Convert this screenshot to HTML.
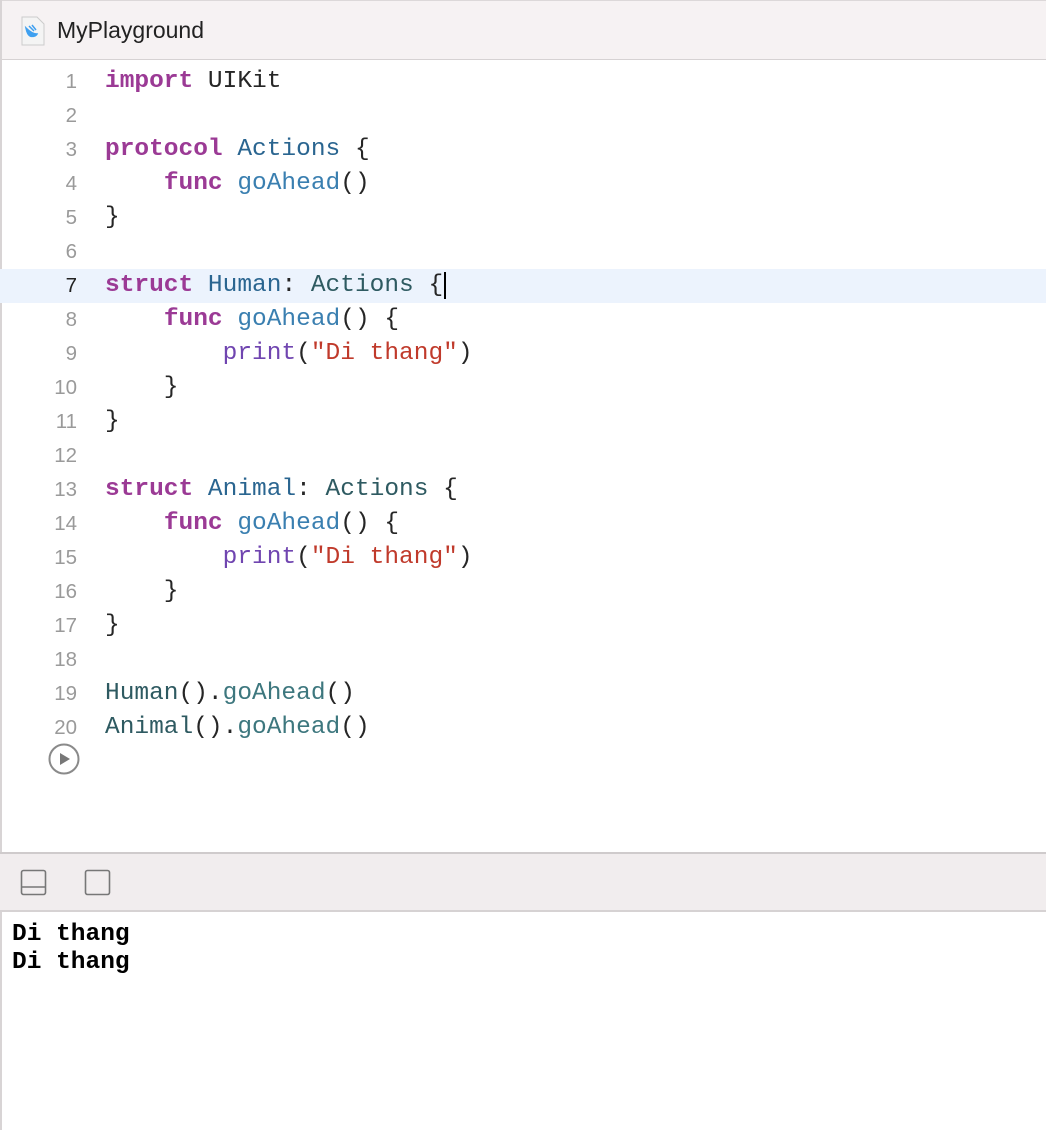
<!DOCTYPE html>
<html><head><meta charset="utf-8"><style>
*{margin:0;padding:0;box-sizing:border-box}
body{width:1046px;height:1130px;background:#fff;position:relative;overflow:hidden;font-family:"Liberation Mono",monospace}
.hdr{position:absolute;left:0;top:0;width:1046px;height:60px;background:#f6f2f3;border-top:1px solid #dcd8d9;border-bottom:1px solid #d6d2d3;border-left:2px solid #d8d4d5}
.hdr span{position:absolute;left:55px;top:16px;font-family:"Liberation Sans",sans-serif;font-size:23px;color:#222}
.leftb{position:absolute;left:0;top:0;width:2px;height:1130px;background:#d8d4d5}
.code{position:absolute;left:0;top:65px;width:1046px;font-size:24.5px;line-height:34px;color:#262626}
.ln{display:block;position:relative;height:34px;white-space:pre}
.ln .n{position:absolute;right:969px;color:#9a9a9a;font-family:"Liberation Sans",sans-serif;font-size:20.5px}
.ln .c{position:absolute;left:105px}
.hl{background:#ecf3fd}
.hl .n{color:#222}
.k{color:#9b3a95;font-weight:bold}.t{color:#2a6590}.a{color:#2e5a61}.f{color:#3a7fb0}.p{color:#7045b0}.s{color:#c03a2b}.m{color:#3d777e}
.bar{position:absolute;left:0;top:852px;width:1046px;height:60px;background:#f1edee;border-top:2px solid #cfcbcc;border-bottom:2px solid #d6d2d3}
.out{position:absolute;left:12px;top:921px;font-weight:bold;font-size:24.5px;line-height:28px;color:#000;white-space:pre}
</style></head><body>
<div class="hdr">
<svg style="position:absolute;left:18px;top:15px" width="26" height="30" viewBox="0 0 26 30"><path d="M2 1h15l7 7v21H2z" fill="#f4f4f4" stroke="#ccc"/><path d="M6 12c3 3 7 6 11 6-1 2-4 3-7 2-2-1-3-3-4-8z M9 10l5 5 M12 9l4 5" fill="#3fa0f0" stroke="#3fa0f0" stroke-width="1.5"/></svg>
<span>MyPlayground</span></div>
<div class="leftb"></div>
<div class="code">
<div class="ln"><span class="n">1</span><span class="c"><span class="k">import</span> UIKit</span></div>
<div class="ln"><span class="n">2</span></div>
<div class="ln"><span class="n">3</span><span class="c"><span class="k">protocol</span> <span class="t">Actions</span> {</span></div>
<div class="ln"><span class="n">4</span><span class="c">    <span class="k">func</span> <span class="f">goAhead</span>()</span></div>
<div class="ln"><span class="n">5</span><span class="c">}</span></div>
<div class="ln"><span class="n">6</span></div>
<div class="ln hl"><span class="n">7</span><span class="c"><span class="k">struct</span> <span class="t">Human</span>: <span class="a">Actions</span> {<span style="border-left:2px solid #000;margin-left:1px"></span></span></div>
<div class="ln"><span class="n">8</span><span class="c">    <span class="k">func</span> <span class="f">goAhead</span>() {</span></div>
<div class="ln"><span class="n">9</span><span class="c">        <span class="p">print</span>(<span class="s">"Di thang"</span>)</span></div>
<div class="ln"><span class="n">10</span><span class="c">    }</span></div>
<div class="ln"><span class="n">11</span><span class="c">}</span></div>
<div class="ln"><span class="n">12</span></div>
<div class="ln"><span class="n">13</span><span class="c"><span class="k">struct</span> <span class="t">Animal</span>: <span class="a">Actions</span> {</span></div>
<div class="ln"><span class="n">14</span><span class="c">    <span class="k">func</span> <span class="f">goAhead</span>() {</span></div>
<div class="ln"><span class="n">15</span><span class="c">        <span class="p">print</span>(<span class="s">"Di thang"</span>)</span></div>
<div class="ln"><span class="n">16</span><span class="c">    }</span></div>
<div class="ln"><span class="n">17</span><span class="c">}</span></div>
<div class="ln"><span class="n">18</span></div>
<div class="ln"><span class="n">19</span><span class="c"><span class="a">Human</span>().<span class="m">goAhead</span>()</span></div>
<div class="ln"><span class="n">20</span><span class="c"><span class="a">Animal</span>().<span class="m">goAhead</span>()</span></div>
</div>
<svg style="position:absolute;left:48px;top:743px" width="34" height="34" viewBox="0 0 34 34"><circle cx="16" cy="16" r="14.5" fill="none" stroke="#8a8a8a" stroke-width="2"/><path d="M12 10l10 6-10 6z" fill="#777"/></svg>
<div class="bar">
<svg style="position:absolute;left:20px;top:15px" width="28" height="28" viewBox="0 0 28 28"><rect x="1.5" y="1.5" width="24" height="24" rx="2" fill="none" stroke="#777" stroke-width="1.6"/><line x1="1.5" y1="18" x2="25.5" y2="18" stroke="#777" stroke-width="1.6"/></svg>
<svg style="position:absolute;left:84px;top:15px" width="28" height="28" viewBox="0 0 28 28"><rect x="1.5" y="1.5" width="24" height="24" rx="2" fill="none" stroke="#777" stroke-width="1.6"/></svg>
</div>
<div class="out">Di thang
Di thang</div>
</body></html>
